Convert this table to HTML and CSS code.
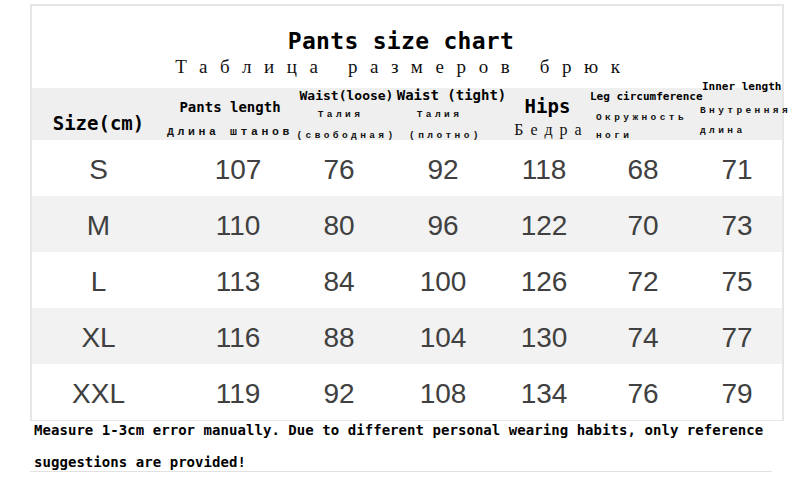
FILE: index.html
```html
<!DOCTYPE html>
<html lang="en">
<head>
<meta charset="utf-8">
<title>Pants size chart</title>
<link rel="stylesheet" href="styles.css">
</head>
<body>
<div class="page">
  <div class="chart">
    <div class="title">Pants size chart</div>
    <div class="subtitle">Таблица размеров брюк</div>
    <div class="grid head">
      <div class="hcell c1"><div class="l-size">Size(cm)</div></div>
      <div class="hcell c2">
        <div class="l-en14 o12">Pants length</div>
        <div class="l-ru11 m12">Длина штанов</div>
      </div>
      <div class="hcell c3">
        <div class="l-en13 o1">Waist(loose)</div>
        <div class="l-ru9 m8 sh-l6">Талия</div>
        <div class="l-ru9 m11">(свободная)</div>
      </div>
      <div class="hcell c4">
        <div class="l-en14">Waist (tight)</div>
        <div class="l-ru9 m8 sh-l12">Талия</div>
        <div class="l-ru9 m11 sh-l6">(плотно)</div>
      </div>
      <div class="hcell c5">
        <div class="l-hips o9">Hips</div>
        <div class="l-serif m6">Бедра</div>
      </div>
      <div class="hcell c6 left">
        <div class="l-en11 o3">Leg circumference</div>
        <div class="l-ru9 m11 in6">Окружность</div>
        <div class="l-ru9 m8 in6">ноги</div>
      </div>
      <div class="hcell c7 left">
        <div class="l-en11 up7 in2">Inner length</div>
        <div class="l-ru9 m14">Внутренняя</div>
        <div class="l-ru9 m10">длина</div>
      </div>
    </div>
    <div class="grid row"><div class="d">S</div><div class="d">107</div><div class="d">76</div><div class="d">92</div><div class="d">118</div><div class="d">68</div><div class="d">71</div></div>
    <div class="grid row alt"><div class="d">M</div><div class="d">110</div><div class="d">80</div><div class="d">96</div><div class="d">122</div><div class="d">70</div><div class="d">73</div></div>
    <div class="grid row"><div class="d">L</div><div class="d">113</div><div class="d">84</div><div class="d">100</div><div class="d">126</div><div class="d">72</div><div class="d">75</div></div>
    <div class="grid row alt"><div class="d">XL</div><div class="d">116</div><div class="d">88</div><div class="d">104</div><div class="d">130</div><div class="d">74</div><div class="d">77</div></div>
    <div class="grid row"><div class="d">XXL</div><div class="d">119</div><div class="d">92</div><div class="d">108</div><div class="d">134</div><div class="d">76</div><div class="d">79</div></div>
  </div>
  <div class="footer">Measure 1-3cm error manually. Due to different personal wearing habits, only reference suggestions are provided!</div>
</div>
</body>
</html>
```

FILE: styles.css
```css
html, body {
  margin: 0;
  padding: 0;
  background: #ffffff;
}
.page {
  padding: 4px 0 0 30px;
  width: 760px;
}
.chart {
  width: 750px;
  border: 2px solid #e6e6e6;
  border-bottom-width: 1px;
}
.title {
  margin-top: 21px;
  height: 28px;
  line-height: 28px;
  text-align: center;
  font-family: "DejaVu Sans Mono", monospace;
  font-weight: bold;
  font-size: 23px;
  letter-spacing: 0.3px;
  color: #000;
  padding-right: 12px;
}
.subtitle {
  height: 24px;
  line-height: 24px;
  text-align: center;
  font-family: "Liberation Serif", serif;
  font-size: 19px;
  letter-spacing: 12.6px;
  color: #111;
  padding-right: 6px;
}
.grid {
  display: grid;
  grid-template-columns: 133px 130px 103px 107px 85px 110px 82px;
}
.head {
  margin-top: 9px;
  height: 52px;
  background: #efefef;
}
.hcell {
  display: flex;
  flex-direction: column;
  align-items: center;
  white-space: nowrap;
  color: #000;
}
.hcell.left { align-items: flex-start; }

.l-size, .l-en14, .l-en13, .l-en11, .l-hips {
  font-family: "DejaVu Sans Mono", monospace;
  font-weight: bold;
  line-height: 1;
}
.l-size { font-size: 19px; margin-top: 26px; }
.l-hips { font-size: 19px; }
.l-en14 { font-size: 14px; }
.l-en13 { font-size: 13px; }
.l-en11 { font-size: 11px; }

.l-ru11, .l-ru9 {
  font-family: "Liberation Mono", monospace;
  font-weight: bold;
  line-height: 1;
  color: #111;
}
.l-ru11 { font-size: 11.5px; letter-spacing: 3.6px; }
.l-ru9 { font-size: 9.5px; letter-spacing: 3.4px; }
.l-serif {
  font-family: "Liberation Serif", serif;
  font-size: 16px;
  line-height: 1;
  letter-spacing: 7px;
  color: #111;
  padding-left: 8px;
}

.o1 { margin-top: 1px; }
.o3 { margin-top: 3px; }
.o9 { margin-top: 9px; }
.o12 { margin-top: 12px; }
.up7 { margin-top: -7px; }
.m6 { margin-top: 6px; }
.m8 { margin-top: 8px; }
.m10 { margin-top: 10px; }
.m11 { margin-top: 11px; }
.m12 { margin-top: 12px; }
.m14 { margin-top: 14px; }
.in2 { margin-left: 2px; }
.in6 { margin-left: 6px; }
.sh-l6 { margin-right: 12px; }
.sh-l12 { margin-right: 24px; }

.row {
  height: 56px;
}
.row.alt { background: #f2f2f2; }
.d {
  font-family: "Liberation Sans", Arial, sans-serif;
  font-size: 28px;
  line-height: 60px;
  text-align: center;
  color: #404040;
}
.d:nth-child(2) { padding-left: 16px; }
.d:nth-child(3) { padding-right: 15px; }
.d:nth-child(4) { padding-right: 17px; }
.d:nth-child(5) { padding-right: 7px; }
.d:nth-child(6) { padding-right: 4px; }
.d:nth-child(7) { padding-right: 8px; }

.footer {
  margin-top: -7px;
  width: 738px;
  height: 57px;
  padding-left: 4px;
  font-family: "DejaVu Sans Mono", monospace;
  font-weight: bold;
  font-size: 14px;
  letter-spacing: 0.05px;
  line-height: 32px;
  color: #000;
  border-bottom: 1px solid #e2e2e2;
}
```
